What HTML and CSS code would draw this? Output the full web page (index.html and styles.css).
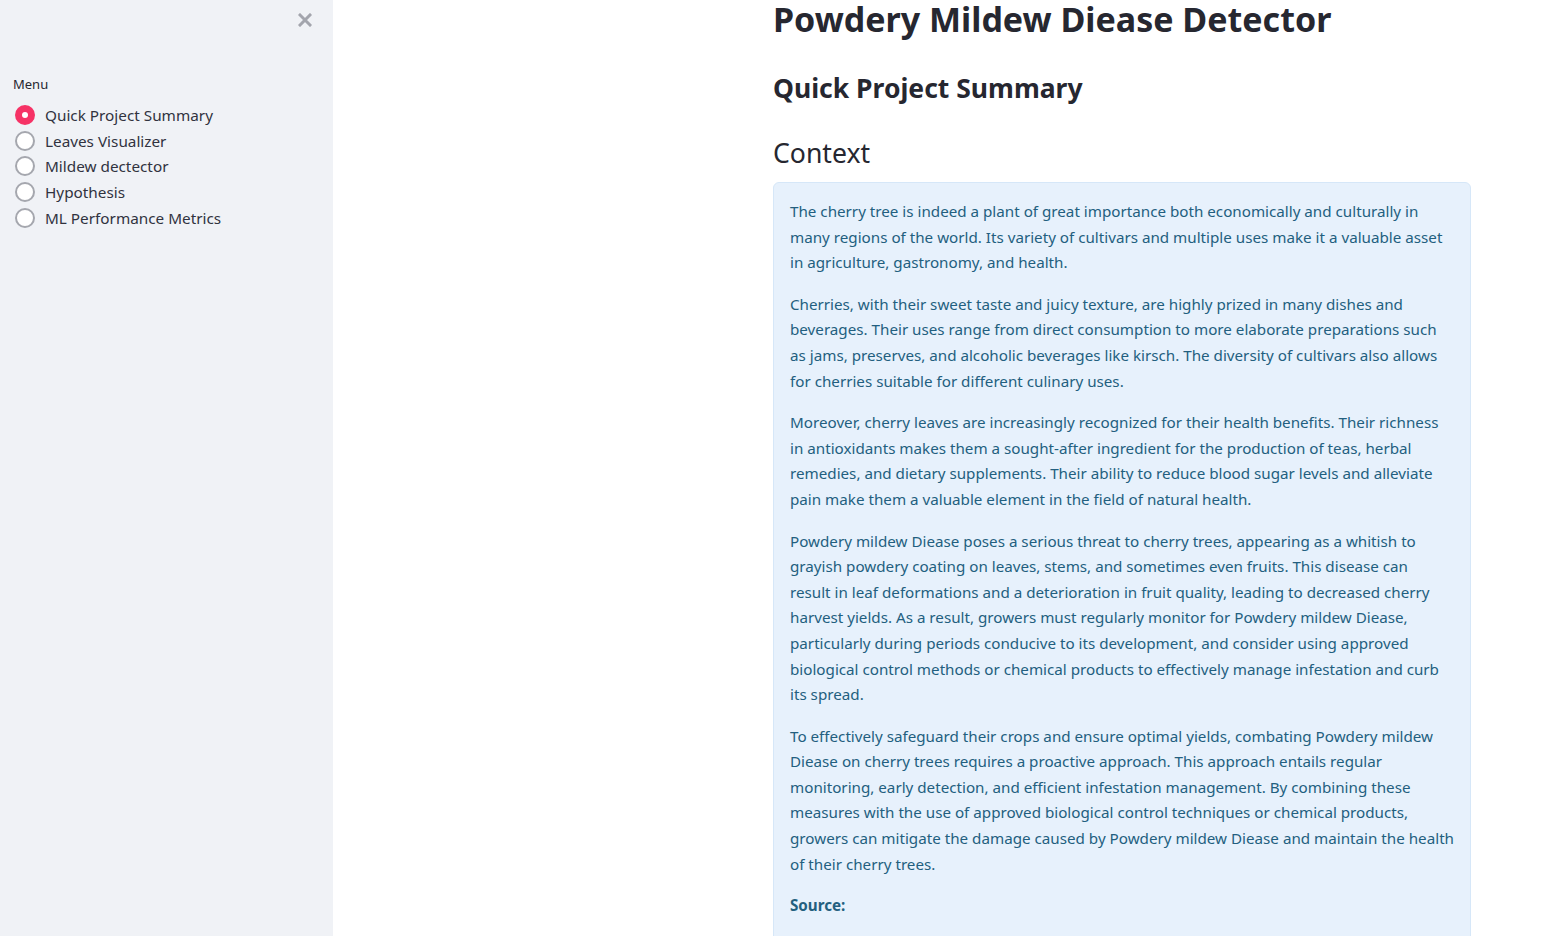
FILE: index.html
```html
<!DOCTYPE html>
<html lang="en">
<head>
<meta charset="utf-8">
<title>Powdery Mildew Diease Detector</title>
<link rel="stylesheet" href="styles.css">
</head>
<body>
<div class="app">
  <aside class="sidebar">
    <div class="sidebar-top">
      <button class="close-btn" aria-label="Close sidebar">
        <svg width="14" height="14" viewBox="0 0 14 14"><path d="M2 2 L12 12 M12 2 L2 12" stroke="#a3a5ad" stroke-width="3" stroke-linecap="square"/></svg>
      </button>
    </div>
    <div class="menu-label">Menu</div>
    <ul class="radio-list">
      <li class="radio-item selected"><span class="radio"></span>Quick Project Summary</li>
      <li class="radio-item"><span class="radio"></span>Leaves Visualizer</li>
      <li class="radio-item"><span class="radio"></span>Mildew dectector</li>
      <li class="radio-item"><span class="radio"></span>Hypothesis</li>
      <li class="radio-item"><span class="radio"></span>ML Performance Metrics</li>
    </ul>
  </aside>
  <main class="main">
    <div class="content">
      <h1 class="title">Powdery Mildew Diease Detector</h1>
      <h2 class="subtitle">Quick Project Summary</h2>
      <h3 class="section">Context</h3>
      <div class="info">
        <p>The cherry tree is indeed a plant of great importance both economically and culturally in many regions of the world. Its variety of cultivars and multiple uses make it a valuable asset in agriculture, gastronomy, and health.</p>
        <p>Cherries, with their sweet taste and juicy texture, are highly prized in many dishes and beverages. Their uses range from direct consumption to more elaborate preparations such as jams, preserves, and alcoholic beverages like kirsch. The diversity of cultivars also allows for cherries suitable for different culinary uses.</p>
        <p>Moreover, cherry leaves are increasingly recognized for their health benefits. Their richness in antioxidants makes them a sought-after ingredient for the production of teas, herbal remedies, and dietary supplements. Their ability to reduce blood sugar levels and alleviate pain make them a valuable element in the field of natural health.</p>
        <p>Powdery mildew Diease poses a serious threat to cherry trees, appearing as a whitish to grayish powdery coating on leaves, stems, and sometimes even fruits. This disease can<br>result in leaf deformations and a deterioration in fruit quality, leading to decreased cherry harvest yields. As a result, growers must regularly monitor for Powdery mildew Diease, particularly during periods conducive to its development, and consider using approved biological control methods or chemical products to effectively manage infestation and curb its spread.</p>
        <p>To effectively safeguard their crops and ensure optimal yields, combating Powdery mildew Diease on cherry trees requires a proactive approach. This approach entails regular monitoring, early detection, and efficient infestation management. By combining these measures with the use of approved biological control techniques or chemical products, growers can mitigate the damage caused by Powdery mildew Diease and maintain the health of their cherry trees.</p>
        <p><strong>Source:</strong></p>
      </div>
    </div>
  </main>
</div>
</body>
</html>
```

FILE: styles.css
```css
* { box-sizing: border-box; }
html, body {
  margin: 0;
  height: 100%;
  overflow: hidden;
}
body {
  font-family: "Noto Sans", "Open Sans", sans-serif;
  color: #262730;
  background: #ffffff;
}
.app {
  display: flex;
  height: 936px;
}
.sidebar {
  width: 333px;
  flex: none;
  background: #f0f2f6;
  padding: 0 16px 0 13px;
}
.sidebar-top {
  display: flex;
  justify-content: flex-end;
  padding-top: 13px;
  height: 74px;
}
.close-btn {
  border: 0;
  background: none;
  padding: 0;
  margin-right: 5px;
  width: 14px;
  height: 14px;
  cursor: pointer;
}
.menu-label {
  font-size: 13px;
  line-height: 20px;
  margin-bottom: 8px;
}
.radio-list {
  list-style: none;
  margin: 0;
  padding: 0;
}
.radio-item {
  display: flex;
  align-items: center;
  gap: 10px;
  height: 25.75px;
  font-size: 15.3px;
  color: #31333f;
}
.radio {
  width: 20px;
  height: 20px;
  margin-left: 2px;
  border-radius: 50%;
  border: 2px solid #a5a7ae;
  background: #ffffff;
  flex: none;
  position: relative;
}
.radio-item.selected .radio {
  border-color: #f63366;
  background: #f63366;
}
.radio-item.selected .radio::after {
  content: "";
  position: absolute;
  left: 5px;
  top: 5px;
  width: 6px;
  height: 6px;
  border-radius: 50%;
  background: #ffffff;
}
.main {
  flex: 1;
  padding-left: 440px;
}
.content {
  width: 698px;
}
.title {
  font-size: 34px;
  font-weight: 700;
  line-height: 40px;
  margin: -1px 0 0;
  color: #262730;
}
.subtitle {
  font-size: 26.5px;
  font-weight: 700;
  line-height: 36px;
  margin: 31px 0 0;
}
.section {
  font-size: 26.6px;
  font-weight: 400;
  line-height: 36px;
  margin: 29px 0 0;
}
.info {
  margin-top: 11px;
  background: #e7f1fc;
  border: 1px solid #d6e7f8;
  border-radius: 6px;
  padding: 16px 16px 16px 16px;
  color: #235f7f;
  font-size: 15.2px;
  line-height: 25.6px;
}
.info p {
  margin: 0 0 16px;
}
.info strong {
  font-weight: 700;
}
```
